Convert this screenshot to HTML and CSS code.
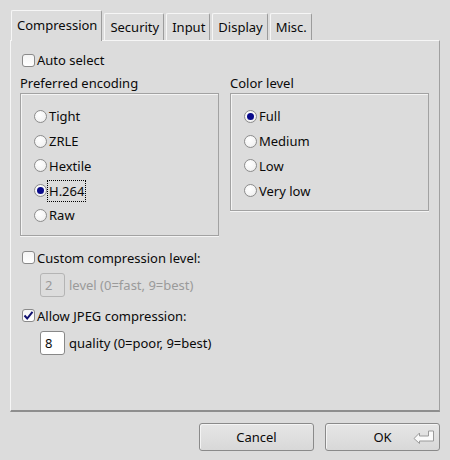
FILE: index.html
```html
<!DOCTYPE html>
<html>
<head>
<meta charset="utf-8">
<link rel="stylesheet" href="styles.css">
</head>
<body>
<div class="dialog">
  <div class="tabs">
    <div class="tab active">Compression</div>
    <div class="tab">Security</div>
    <div class="tab">Input</div>
    <div class="tab">Display</div>
    <div class="tab">Misc.</div>
  </div>
  <div class="panel">
    <label class="check row-auto"><span class="cbox"></span>Auto select</label>
    <div class="groups">
      <div class="group">
        <div class="glabel">Preferred encoding</div>
        <div class="gbox">
          <div class="radio"><span class="rdot"></span>Tight</div>
          <div class="radio"><span class="rdot"></span>ZRLE</div>
          <div class="radio"><span class="rdot"></span>Hextile</div>
          <div class="radio"><span class="rdot on"></span><span class="focus">H.264</span></div>
          <div class="radio"><span class="rdot"></span>Raw</div>
        </div>
      </div>
      <div class="group">
        <div class="glabel">Color level</div>
        <div class="gbox">
          <div class="radio"><span class="rdot on"></span>Full</div>
          <div class="radio"><span class="rdot"></span>Medium</div>
          <div class="radio"><span class="rdot"></span>Low</div>
          <div class="radio"><span class="rdot"></span>Very low</div>
        </div>
      </div>
    </div>
    <label class="check row-custom"><span class="cbox"></span>Custom compression level:</label>
    <div class="spinrow disabled"><span class="spin">2</span>level (0=fast, 9=best)</div>
    <label class="check row-jpeg"><span class="cbox checked"><svg width="11" height="11" viewBox="0 0 11 11"><path d="M1.5 5.5 L4.2 8.5 L9.5 1.8" fill="none" stroke="#101070" stroke-width="2"/></svg></span>Allow JPEG compression:</label>
    <div class="spinrow"><span class="spin white">8</span>quality (0=poor, 9=best)</div>
  </div>
  <div class="footer">
    <button class="btn">Cancel</button>
    <button class="btn ok">OK<svg class="ret" width="22" height="14" viewBox="0 0 22 14"><path d="M1 8.5 L6.5 3 V6 H15.5 V1 H20.5 V11 H6.5 V13.5 Z" fill="#fafafa" stroke="#9a9a9a" stroke-width="1"/></svg></button>
  </div>
</div>
</body>
</html>
```
FILE: styles.css
```css
html, body {
  margin: 0;
  padding: 0;
  background: #dcdcdc;
}
body {
  font-family: "Noto Sans", "Open Sans", sans-serif;
  font-size: 13px;
  color: #0a0a0a;
  width: 450px;
  height: 460px;
  overflow: hidden;
}
.dialog {
  padding: 10px 10px 0 10px;
}
.tabs {
  display: flex;
  align-items: flex-end;
  gap: 2px;
  height: 30px;
  padding-left: 1px;
  position: relative;
  z-index: 1;
}
.tab {
  height: 27px;
  line-height: 26px;
  padding: 0 4px 0 5px;
  border: 1px solid #f6f6f6;
  border-right-color: #9c9c9c;
  border-bottom: none;
  border-radius: 2px 2px 0 0;
  box-sizing: border-box;
  background: #dcdcdc;
}
.tab.active {
  height: 31px;
  line-height: 29px;
  margin-bottom: -1px;
  padding: 0 4px 0 5px;
}
.panel {
  width: 430px;
  height: 372px;
  box-sizing: border-box;
  border: 1px solid #f6f6f6;
  border-right-color: #a0a0a0;
  border-bottom: 2px solid #8e8e8e;
  padding: 9px 10px 0 9px;
  display: flex;
  flex-direction: column;
}
.check {
  display: flex;
  align-items: center;
  height: 20px;
  padding-left: 2px;
}
.cbox {
  width: 13px;
  height: 13px;
  box-sizing: border-box;
  border: 1px solid #8a8a8a;
  border-radius: 3px;
  background: linear-gradient(#f4f4f4, #ffffff);
  margin-right: 2px;
  display: flex;
  align-items: center;
  justify-content: center;
}
.cbox svg { display: block; }
.groups {
  display: flex;
  gap: 11px;
  margin-top: 4px;
  align-items: flex-start;
}
.group {
  width: 200px;
}
.glabel {
  height: 19px;
  line-height: 18px;
}
.gbox {
  border: 1px solid #a2a2a2;
  box-shadow: inset 1px 1px 0 #f4f4f4, 0 1px 0 #f4f4f4;
  padding: 10px 0 7px 13px;
}
.radio {
  display: flex;
  align-items: center;
  height: 24.75px;
}
.rdot {
  width: 13px;
  height: 13px;
  box-sizing: border-box;
  border: 1px solid #8c8c8c;
  border-radius: 50%;
  background: radial-gradient(circle at 40% 35%, #ffffff 0, #f4f4f4 60%, #e0e0e0 100%);
  margin-right: 2px;
  display: flex;
  align-items: center;
  justify-content: center;
}
.rdot.on::after {
  content: "";
  width: 7px;
  height: 7px;
  border-radius: 50%;
  background: #0a0a8a;
}
.focus {
  outline: 1px dotted #000;
  outline-offset: 1px;
}
.row-custom {
  margin-top: 12px;
}
.spinrow {
  display: flex;
  align-items: center;
  height: 24px;
  padding-left: 20px;
  margin-top: 5px;
  margin-bottom: 9px;
}
.spinrow.disabled {
  color: #9a9a9a;
}
.spin {
  width: 25px;
  height: 24px;
  box-sizing: border-box;
  border: 1px solid #b4b4b4;
  border-radius: 3px;
  padding-left: 4px;
  line-height: 22px;
  margin-right: 4px;
  background: #dcdcdc;
}
.spin.white {
  background: #ffffff;
  border-color: #888;
  color: #0a0a0a;
}
.footer {
  display: flex;
  justify-content: flex-end;
  gap: 11px;
  padding-top: 11px;
  padding-right: 0;
}
.btn {
  width: 115px;
  height: 28px;
  font-family: "Noto Sans", "Open Sans", sans-serif;
  font-size: 13px;
  color: #0a0a0a;
  border: 1px solid #8a8a8a;
  border-radius: 3px;
  background: linear-gradient(#e6e6e6, #d8d8d8);
  box-shadow: inset 1px 1px 0 #f4f4f4;
  position: relative;
  padding: 0;
}
.ret {
  position: absolute;
  right: 4px;
  top: 6px;
}
```
